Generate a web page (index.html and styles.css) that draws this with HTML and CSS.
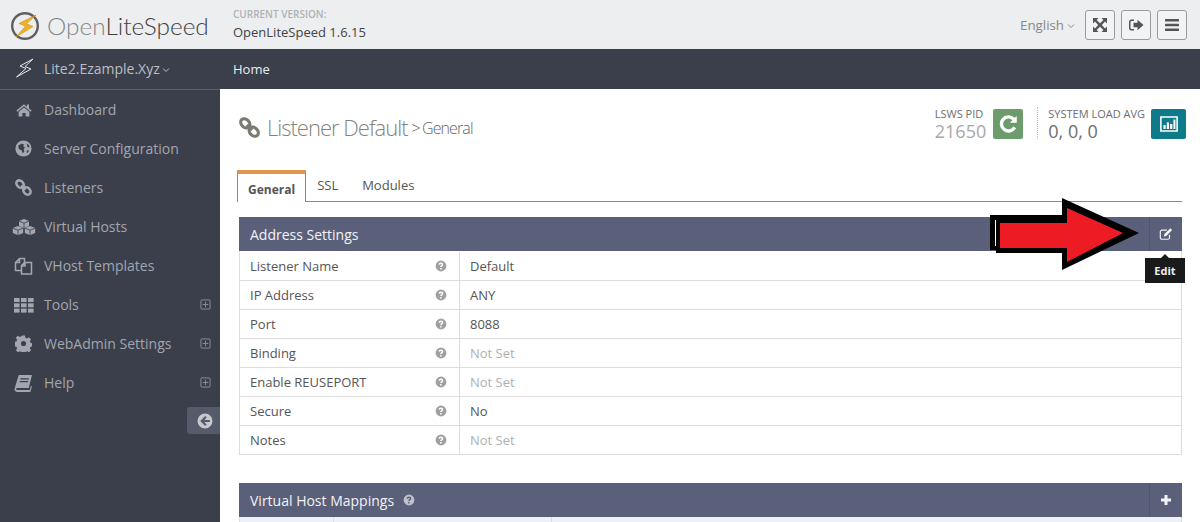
FILE: index.html
```html
<!DOCTYPE html>
<html lang="en">
<head>
<meta charset="utf-8">
<title>Listener Default</title>
<link rel="stylesheet" href="styles.css">
</head>
<body>
<svg class="defs" width="0" height="0">
  <symbol id="i-link" viewBox="0 0 16 16"><g fill="none" stroke="currentColor" stroke-width="2.400"><ellipse cx="4.800" cy="4.800" rx="3.900" ry="3" transform="rotate(45 4.800 4.800)"/><ellipse cx="11.200" cy="11.200" rx="3.900" ry="3" transform="rotate(45 11.200 11.200)"/><path d="M6 6l4 4"/></g></symbol>
  <symbol id="i-home" viewBox="0 0 16 16"><path fill="currentColor" d="M8 2.200 .3 8.600l1 1.100L8 4.200l6.700 5.500 1-1.100-2.700-2.200V2.600h-2v2.100zM8 5.400 2.600 9.800V14.400h3.800v-3.400h3.200v3.400h3.800V9.800z"/></symbol>
  <symbol id="i-globe" viewBox="0 0 16 16"><circle cx="8" cy="8" r="7.600" fill="currentColor"/><path fill="#3a3f4b" d="M3 5.500 6 3.600l2.400.5-.7 1.800L9.400 7l-1.200 1.600.6 2.400-1.600 1.400-.8-2.600L3.600 8.400zM11 3.400l2 1.400.8 2.200-2-.4zM11.400 9.600l1.800.2-1.400 2.400-.9-.6z"/></symbol>
  <symbol id="i-cubes" viewBox="0 0 24 16"><g fill="currentColor"><path d="M12 0l5 2v5l-5 2-5-2V2z"/><path d="M6 7l5.200 2v5L6 16.200.8 14V9z"/><path d="M18 7l5.200 2v5L18 16.200 12.800 14V9z"/></g><g fill="none" stroke="#3a3f4b" stroke-width=".8"><path d="M7 2.200l5 2 5-2M12 4.200v4.600M.8 9.200l5.200 2 5.200-2M6 11.200v5M12.800 9.200l5.200 2 5.200-2M18 11.200v5"/></g></symbol>
  <symbol id="i-files" viewBox="0 0 18 18"><path fill="none" stroke="currentColor" stroke-width="1.500" d="M1 5.500 5 1.500h5v4L7 8.500v5H1zM7 8.500l3.500-3H17v11.500H7zM10.500 5.500v3.500H7M5 1.500v4H1"/></symbol>
  <symbol id="i-grid" viewBox="0 0 20 16"><g fill="currentColor"><rect x="0" y="1" width="5.600" height="4"/><rect x="7" y="1" width="5.600" height="4"/><rect x="14" y="1" width="5.600" height="4"/><rect x="0" y="6.300" width="5.600" height="4"/><rect x="7" y="6.300" width="5.600" height="4"/><rect x="14" y="6.300" width="5.600" height="4"/><rect x="0" y="11.600" width="5.600" height="4"/><rect x="7" y="11.600" width="5.600" height="4"/><rect x="14" y="11.600" width="5.600" height="4"/></g></symbol>
  <symbol id="i-cog" viewBox="0 0 16 16"><path fill="currentColor" fill-rule="evenodd" d="M6.600.5h2.800l.4 2 1.500.7 1.800-1.100 2 2-1.100 1.800.7 1.500 2 .4v2.800l-2 .4-.7 1.500 1.100 1.800-2 2-1.800-1.100-1.500.7-.4 2H6.600l-.4-2-1.500-.7-1.800 1.100-2-2 1.100-1.800-.7-1.500-2-.4V6.400l2-.4.700-1.500L.7 2.700l2-2 1.800 1.100 1.500-.7zM8 5.600a2.400 2.400 0 1 0 0 4.800 2.400 2.400 0 0 0 0-4.800z"/></symbol>
  <symbol id="i-book" viewBox="0 0 18 16"><path fill="currentColor" d="M4.500.5H17l-3 12.300H3.500c-1 0-1.500.5-1.500 1s.5.900 1.300.9H15l1-4 1 .5-1.500 5.300H3C1 16 .2 14.800.6 13.200zM6 3.500v1.200h8V3.500zM5.400 6v1.200h8V6z"/></symbol>
  <symbol id="i-plus-sq" viewBox="0 0 12 12"><path fill="none" stroke="currentColor" d="M2 1h8a1 1 0 0 1 1 1v8a1 1 0 0 1-1 1H2a1 1 0 0 1-1-1V2a1 1 0 0 1 1-1zM6 3v6M3 6h6"/></symbol>
  <symbol id="i-left" viewBox="0 0 16 16"><path fill="currentColor" fill-rule="evenodd" d="M8 .5a7.500 7.500 0 1 1 0 15 7.500 7.500 0 0 1 0-15zM8.200 3 3.200 8l5 5 1.500-1.500-2.400-2.400h5.500V6.900H7.300l2.400-2.400z"/></symbol>
  <symbol id="i-expand" viewBox="0 0 16 16"><path fill="currentColor" d="M1 1h5.500L4.600 2.900 8 6.200l3.400-3.300L9.500 1H15v5.500l-1.900-1.900L9.800 8l3.300 3.400 1.900-1.900V15H9.500l1.900-1.900L8 9.800l-3.400 3.300L6.500 15H1V9.500l1.900 1.900L6.200 8 2.900 4.600 1 6.500z"/></symbol>
  <symbol id="i-signout" viewBox="0 0 16 16"><path fill="currentColor" d="M6 2.500H3.500A2.500 2.500 0 0 0 1 5v6a2.500 2.500 0 0 0 2.500 2.500H6V12H3.500a1 1 0 0 1-1-1V5a1 1 0 0 1 1-1H6zM9.500 2.800 15.500 8l-6 5.200V10.200H5.500V5.800h4z"/></symbol>
  <symbol id="i-bars" viewBox="0 0 16 16"><g fill="currentColor"><rect x="1" y="2" width="14" height="2.600" rx=".5"/><rect x="1" y="6.700" width="14" height="2.600" rx=".5"/><rect x="1" y="11.400" width="14" height="2.600" rx=".5"/></g></symbol>
  <symbol id="i-refresh" viewBox="0 0 16 16"><path fill="currentColor" d="M15 1.500V7H9.500l2-2.100A4.300 4.300 0 1 0 12.200 10l2.300 1.400A7 7 0 1 1 13.400 3z"/></symbol>
  <symbol id="i-chart" viewBox="0 0 18 16"><path fill="none" stroke="currentColor" stroke-width="1.400" d="M1.700 1.700h14.600v12.600H1.700z"/><g fill="currentColor"><rect x="4" y="9" width="2" height="3.500"/><rect x="7" y="6.500" width="2" height="6"/><rect x="10" y="8" width="2" height="4.500"/><rect x="13" y="4" width="1.800" height="8.500"/></g></symbol>
  <symbol id="i-help" viewBox="0 0 12 12"><path fill="currentColor" fill-rule="evenodd" d="M6 .6a5.400 5.400 0 1 1 0 10.800A5.400 5.400 0 0 1 6 .6zM5.100 8v1.400h1.500V8zM6 2.600c-1.400 0-2.300.7-2.400 1.900l1.400.3c.1-.6.400-.9 1-.9.500 0 .8.300.8.600 0 .4-.3.600-.8 1-.5.400-.9.800-.9 1.600h1.500c0-.4.200-.5.700-.9.600-.4 1-.9 1-1.700 0-1.100-.9-1.900-2.300-1.900z"/></symbol>
  <symbol id="i-edit" viewBox="0 0 16 16"><path fill="none" stroke="currentColor" stroke-width="1.300" d="M12 8.800V12a2 2 0 0 1-2 2H3.500a2 2 0 0 1-2-2V5.500a2 2 0 0 1 2-2H9"/><path fill="currentColor" d="M13 1.500 15 3.500 8.300 10.200l-2.700.6.600-2.700z"/></symbol>
  <symbol id="i-plus" viewBox="0 0 12 12"><path fill="currentColor" d="M4.500 1h3v3.500H11v3H7.500V11h-3V7.500H1v-3h3.500z"/></symbol>
  <symbol id="i-chev" viewBox="0 0 8 6"><path fill="none" stroke="currentColor" d="M1 1.500 4 4.500l3-3"/></symbol>
</svg>

<header class="topbar">
  <div class="brand">
    <svg class="brand-mark" viewBox="0 0 30 30">
      <circle cx="15" cy="15" r="12.800" fill="#ecedef" stroke="#5f5f5f" stroke-width="2.400"/>
      <path fill="#f2b125" stroke="#b9860f" stroke-width=".5" d="M26 4 9 12.500l6.500 2.700L6 26l17-10.500-6.500-2.700z"/>
    </svg>
    <div class="brand-name"><span class="brand-light">Open</span>LiteSpeed</div>
  </div>
  <div class="version">
    <div class="version-label">CURRENT VERSION:</div>
    <div class="version-value">OpenLiteSpeed 1.6.15</div>
  </div>
  <div class="top-actions">
    <span class="lang">English <svg class="chev"><use href="#i-chev"/></svg></span>
    <button class="top-btn"><svg class="ic-16"><use href="#i-expand"/></svg></button>
    <button class="top-btn"><svg class="ic-16"><use href="#i-signout"/></svg></button>
    <button class="top-btn"><svg class="ic-16"><use href="#i-bars"/></svg></button>
  </div>
</header>

<div class="shell">
  <aside class="sidebar">
    <div class="host">
      <svg class="host-mark" viewBox="0 0 20 20"><path fill="none" stroke="#e6e7ea" stroke-width="1" d="M18 1 5 8l6 2.500L1.500 19 16 11 10 8.500z"/></svg>
      <span>Lite2.Ezample.Xyz</span>
      <svg class="chev"><use href="#i-chev"/></svg>
    </div>
    <nav class="menu">
      <a class="menu-item"><span class="menu-ic"><svg class="ic-home"><use href="#i-home"/></svg></span>Dashboard</a>
      <a class="menu-item"><span class="menu-ic"><svg class="ic-globe"><use href="#i-globe"/></svg></span>Server Configuration</a>
      <a class="menu-item"><span class="menu-ic"><svg class="ic-globe"><use href="#i-link"/></svg></span>Listeners</a>
      <a class="menu-item"><span class="menu-ic"><svg class="ic-cubes"><use href="#i-cubes"/></svg></span>Virtual Hosts</a>
      <a class="menu-item"><span class="menu-ic"><svg class="ic-files"><use href="#i-files"/></svg></span>VHost Templates</a>
      <a class="menu-item"><span class="menu-ic"><svg class="ic-grid"><use href="#i-grid"/></svg></span>Tools<svg class="menu-more"><use href="#i-plus-sq"/></svg></a>
      <a class="menu-item"><span class="menu-ic"><svg class="ic-globe"><use href="#i-cog"/></svg></span>WebAdmin Settings<svg class="menu-more"><use href="#i-plus-sq"/></svg></a>
      <a class="menu-item"><span class="menu-ic"><svg class="ic-files"><use href="#i-book"/></svg></span>Help<svg class="menu-more"><use href="#i-plus-sq"/></svg></a>
    </nav>
    <div class="collapse-row"><span class="collapse"><svg class="ic-16"><use href="#i-left"/></svg></span></div>
  </aside>

  <div class="content">
    <div class="crumbs">Home</div>
    <main class="main">
      <div class="page-head">
        <h1 class="title"><svg class="title-ic"><use href="#i-link"/></svg><span class="title-text">Listener Default</span><span class="title-sub">&gt; General</span></h1>
        <div class="stats">
          <div class="stat">
            <div class="stat-label">LSWS PID</div>
            <div class="stat-value stat-muted">21650</div>
          </div>
          <span class="stat-btn stat-green"><svg class="ic-20"><use href="#i-refresh"/></svg></span>
          <div class="stat stat-sep">
            <div class="stat-label">SYSTEM LOAD AVG</div>
            <div class="stat-value">0, 0, 0</div>
          </div>
          <span class="stat-btn stat-teal"><svg class="ic-20"><use href="#i-chart"/></svg></span>
        </div>
      </div>

      <div class="tabs">
        <span class="tab tab-active">General</span>
        <span class="tab">SSL</span>
        <span class="tab">Modules</span>
      </div>

      <section class="panel">
        <div class="panel-head">
          <span class="panel-title">Address Settings</span>
          <span class="panel-action">
            <svg class="ic-14"><use href="#i-edit"/></svg>
            <span class="tooltip">Edit</span>
          </span>
        </div>
        <div class="rows">
          <div class="row"><div class="cell-key">Listener Name<svg class="help"><use href="#i-help"/></svg></div><div class="cell-val">Default</div></div>
          <div class="row"><div class="cell-key">IP Address<svg class="help"><use href="#i-help"/></svg></div><div class="cell-val">ANY</div></div>
          <div class="row"><div class="cell-key">Port<svg class="help"><use href="#i-help"/></svg></div><div class="cell-val">8088</div></div>
          <div class="row"><div class="cell-key">Binding<svg class="help"><use href="#i-help"/></svg></div><div class="cell-val cell-unset">Not Set</div></div>
          <div class="row"><div class="cell-key">Enable REUSEPORT<svg class="help"><use href="#i-help"/></svg></div><div class="cell-val cell-unset">Not Set</div></div>
          <div class="row"><div class="cell-key">Secure<svg class="help"><use href="#i-help"/></svg></div><div class="cell-val">No</div></div>
          <div class="row"><div class="cell-key">Notes<svg class="help"><use href="#i-help"/></svg></div><div class="cell-val cell-unset">Not Set</div></div>
        </div>
      </section>

      <section class="panel panel-second">
        <div class="panel-head">
          <span class="panel-title">Virtual Host Mappings<svg class="help help-head"><use href="#i-help"/></svg></span>
          <span class="panel-action panel-plus"><svg class="ic-12"><use href="#i-plus"/></svg></span>
        </div>
        <div class="map-head"><span class="map-a"></span><span class="map-b"></span><span class="map-c"></span></div>
      </section>
    </main>
  </div>
</div>

<svg class="arrow" viewBox="0 0 152 76">
  <path fill="#000" d="M1 18H73V1L150 36 73 73V56H7V53H1z"/>
  <path fill="#ed1c24" d="M11 26H78V11L134 36 78 65V51H11z"/>
  <path stroke="#fff" stroke-width="1" d="M6.500 23V49"/>
</svg>
</body>
</html>
```

FILE: styles.css
```css
* { box-sizing: border-box; }
html, body { margin: 0; height: 522px; overflow: hidden; }
body { position: relative; font-family: "Open Sans", sans-serif; font-size: 13px; color: #333; background: #fff; }
.defs { position: absolute; }
svg { display: block; }

.topbar { height: 49px; background: #eceef0; display: flex; align-items: stretch; }
.brand { width: 220px; padding-left: 10px; display: flex; align-items: center; gap: 8px; }
.brand-mark { width: 30px; height: 30px; flex: none; margin-top: 2px; }
.brand-name { font-family: Lato, sans-serif; font-size: 24.400px; font-weight: 300; color: #3f3f3f; margin-top: 1px; margin-left: -1px; white-space: nowrap; }
.brand-light { font-weight: 300; color: #85878a; }
.version { padding: 7px 0 0 13px; }
.version-label { font-size: 10px; line-height: 14px; font-weight: 600; color: #b0b3b6; }
.version-value { font-size: 13px; line-height: 20px; color: #444; margin-top: 1px; }
.top-actions { margin-left: auto; padding: 1px 13px 0 0; display: flex; align-items: center; gap: 6px; }
.lang { display: flex; align-items: center; gap: 3px; color: #888; font-size: 13.300px; margin-right: 4px; }
.chev { width: 8px; height: 6px; color: inherit; margin-top: 2px; }
.top-btn { width: 30px; height: 30px; padding: 0; display: flex; align-items: center; justify-content: center; background: #f2f3f4; border: 1px solid #9b9b9b; border-radius: 3px; color: #555; }
.ic-16 { width: 16px; height: 16px; }
.ic-20 { width: 20px; height: 20px; }
.ic-14 { width: 14px; height: 14px; }
.ic-12 { width: 12px; height: 12px; }

.shell { display: flex; height: 473px; }
.sidebar { width: 220px; flex: none; background: #3a3f4b; color: #a3a6ad; }
.host { height: 41px; border-bottom: 1px solid #5b5f69; display: flex; align-items: center; padding: 0 0 2px 15px; color: #bcbec4; font-size: 14px; }
.host-mark { width: 20px; height: 20px; margin-right: 9px; }
.host .chev { margin-left: 2px; margin-top: 4px; }
.menu { display: flex; flex-direction: column; }
.menu-item { height: 39px; display: flex; align-items: center; font-size: 14px; color: #a3a6ad; padding-right: 9px; }
.menu-ic { width: 44px; flex: none; display: flex; justify-content: center; padding-left: 3px; color: #a3a6ad; }
.ic-home { width: 18px; height: 16px; }
.ic-globe { width: 17px; height: 17px; }
.ic-cubes { width: 24px; height: 16px; }
.ic-files { width: 19px; height: 18px; }
.ic-grid { width: 20px; height: 16px; }
.menu-more { width: 11px; height: 11px; margin-left: auto; opacity: .8; }
.collapse-row { display: flex; justify-content: flex-end; margin-top: 5px; }
.collapse { width: 33px; height: 27px; background: #565b6b; border-radius: 3px 0 0 3px; display: flex; align-items: center; padding-left: 10px; color: #c6c8cc; }

.content { flex: 1; min-width: 0; display: flex; flex-direction: column; }
.crumbs { height: 40px; background: #3a3f4b; color: #eceef0; font-size: 13px; padding: 0 13px; display: flex; align-items: center; }
.main { flex: 1; padding: 0 18px 0 19px; overflow: hidden; }

.page-head { height: 81px; display: flex; justify-content: space-between; }
.title { margin: 0; display: flex; align-items: center; font-weight: 300; height: 76px; color: #777; }
.title-ic { width: 21px; height: 21px; color: #7a7a70; margin-right: 7px; }
.title-text { font-size: 22px; letter-spacing: -1px; color: #84847c; }
.title-sub { font-size: 16px; letter-spacing: -.9px; word-spacing: -1px; margin-left: 4px; font-weight: 300; color: #666; padding-top: 2px; }
.stats { display: flex; align-items: flex-start; padding-top: 19px; margin-right: -4px; }
.stat { margin-top: -1px; }
.stat-label { font-size: 11px; line-height: 13px; color: #6e6e6e; }
.stat-value { font-size: 18px; line-height: 22px; color: #6e6e6e; }
.stat-muted { color: #a8a8a8; }
.stat-btn { width: 30px; height: 30px; margin: 1px 0 0 7px; border-radius: 2px; display: flex; align-items: center; justify-content: center; color: #fff; }
.stat-green { background: #6c9b6c; }
.stat-teal { background: #0e7a8a; width: 35px; margin-left: 6px; }
.stat-sep { margin-left: 14px; padding-left: 10px; border-left: 1px dotted #bbb; height: 32px; }

.tabs { height: 32px; display: flex; align-items: flex-end; border-bottom: 1px solid #8a8a8a; margin-left: -2px; }
.tab { height: 31px; padding: 0 12px 2px; font-size: 13px; display: flex; align-items: center; color: #555; }
.tab:nth-child(2) { margin-left: -1px; }
.tab-active { height: 32px; margin-bottom: -1px; padding: 3px 10px 0; border: 1px solid #8a8a8a; border-top: 4px solid #e2954e; border-bottom: 0; background: #fff; font-size: 12px; font-weight: 700; color: #555; }

.panel { margin-top: 15px; border-right: 1px solid #ddd; border-left: 1px solid #ddd; }
.panel-head { height: 34px; margin: 0 -1px; background: #5a6079; color: #f2f3f6; display: flex; align-items: stretch; justify-content: space-between; }
.panel-title { font-size: 14px; padding-left: 11px; display: flex; align-items: center; }
.panel-action { position: relative; width: 33px; border-left: 1px solid #4f556c; display: flex; align-items: center; justify-content: center; color: #f2f3f6; }
.tooltip { position: absolute; top: 41px; left: -5px; width: 40px; height: 25px; background: #1a1a1a; color: #eee; font-size: 11px; font-weight: 700; display: flex; align-items: center; justify-content: center; }
.tooltip::before { content: ""; position: absolute; top: -4px; left: 16px; border: 4px solid transparent; border-top: 0; border-bottom-color: #1a1a1a; }
.rows { padding-top: 1px; }
.row { height: 29px; display: flex; border-bottom: 1px solid #ddd; font-size: 13px; line-height: 29px; }
.cell-key { width: 220px; flex: none; padding: 0 10px; border-right: 1px solid #ddd; display: flex; align-items: center; justify-content: space-between; color: #555; }
.cell-val { padding: 0 10px; color: #555; }
.cell-unset { color: #b0b0b0; }
.help { width: 12px; height: 12px; color: #a0a0a0; margin-right: 2px; }
.help-head { display: inline-block; margin-left: 9px; color: #bfc2cc; }
.panel-second { margin-top: 28px; }
.map-head { height: 20px; display: flex; background: #eef0f4; }
.map-a { width: 94px; border-right: 1px solid #ddd; }
.map-b { width: 218px; border-right: 1px solid #ddd; }
.map-c { flex: 1; }

.arrow { position: absolute; left: 989px; top: 197px; width: 152px; height: 76px; }
```
